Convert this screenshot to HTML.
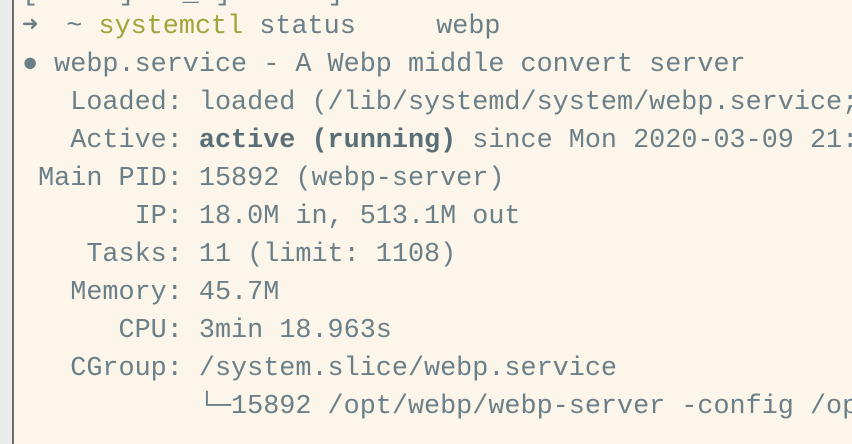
<html><head><style>
body{margin:0;width:852px;height:444px;overflow:hidden;background:#fcf6ea;position:relative}
.strip{position:absolute;left:0;top:0;width:12px;height:444px;background:#ebebeb;border-right:2px solid #6a6a6a}
pre{position:absolute;left:22px;top:8px;margin:0;font-family:"Liberation Mono","DejaVu Sans Mono",monospace;font-size:26.8px;line-height:38px;color:#6b7f88;white-space:pre}
.g{color:#a2a43a}
b{color:#5a6e77}
</style></head><body>
<div class="strip"></div>
<pre><span style="position:absolute;top:-33px;left:0;color:#6b7f88">[ . . ]   _ ]      ]</span>➜  <span style="margin-left:-4px">~</span> <span class="g">systemctl</span> status     webp
● webp.service - A Webp middle convert server
   Loaded: loaded (/lib/systemd/system/webp.service;
   Active: <b>active (running)</b> since Mon 2020-03-09 21:
 Main PID: 15892 (webp-server)
       IP: 18.0M in, 513.1M out
    Tasks: 11 (limit: 1108)
   Memory: 45.7M
      CPU: 3min 18.963s
   CGroup: /system.slice/webp.service
           └─15892 /opt/webp/webp-server -config /opt</pre>
</body></html>
